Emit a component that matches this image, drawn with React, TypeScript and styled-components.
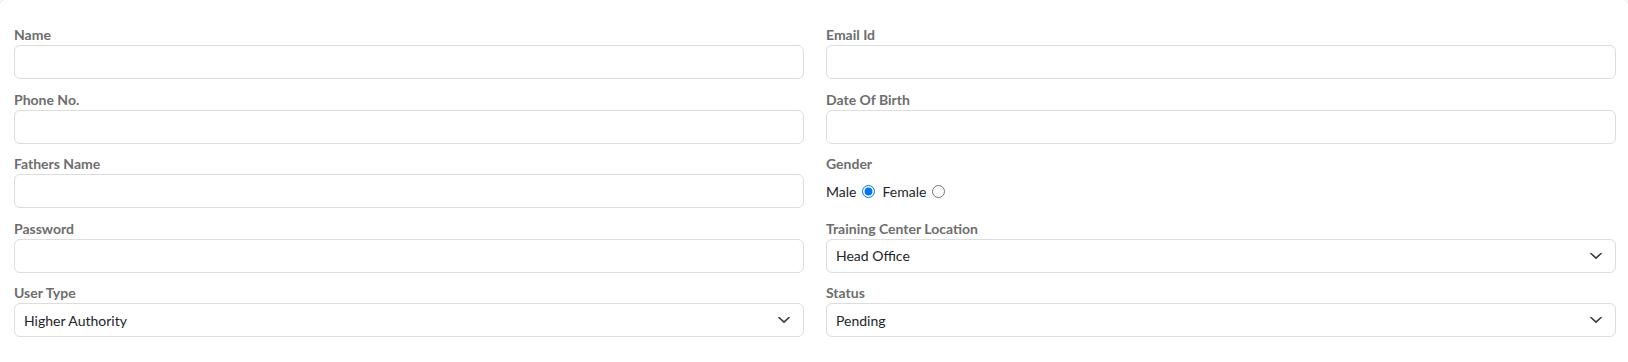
import React from "react";
import styled, { createGlobalStyle } from "styled-components";

const GlobalStyle = createGlobalStyle`
  html, body {
    margin: 0;
    padding: 0;
    background: #ffffff;
    overflow: hidden;
  }
  body {
    font-family: Lato, "Liberation Sans", Arial, sans-serif;
  }
  * { box-sizing: border-box; }
`;

const Card = styled.div`
  margin: -1px 0 0 -1px;
  width: calc(100% + 2px);
  min-height: 380px;
  border: 1px solid #e4e4e4;
  border-radius: 6px;
  background: #fff;
  padding: 26px 12px 0 14px;
`;

const FormGrid = styled.form`
  display: grid;
  grid-template-columns: 1fr 1fr;
  column-gap: 22px;
  row-gap: 11.6px;
`;

const Field = styled.div`
  display: flex;
  flex-direction: column;
  min-width: 0;
`;

const Label = styled.label`
  font-family: Lato, "Liberation Sans", Arial, sans-serif;
  font-size: 14px;
  font-weight: 700;
  line-height: 17px;
  color: #6d6d6d;
  margin-bottom: 2px;
`;

const TextInput = styled.input`
  height: 34px;
  width: 100%;
  border: 1px solid #dcdde1;
  border-radius: 6px;
  padding: 0 9px;
  font-family: Lato, "Liberation Sans", Arial, sans-serif;
  font-size: 14px;
  color: #212529;
  background: #fff;
  outline: none;
`;

const SelectWrap = styled.div`
  position: relative;
  width: 100%;
`;

const Select = styled.select`
  appearance: none;
  -webkit-appearance: none;
  height: 34px;
  width: 100%;
  border: 1px solid #dcdde1;
  border-radius: 6px;
  padding: 0 36px 0 9px;
  font-family: Lato, "Liberation Sans", Arial, sans-serif;
  font-size: 14px;
  color: #212529;
  background: #fff;
  outline: none;
`;

const Chevron = styled.svg`
  position: absolute;
  right: 14px;
  top: 50%;
  transform: translateY(-50%);
  width: 12px;
  height: 8px;
  pointer-events: none;
`;

const RadioRow = styled.div`
  height: 34px;
  display: flex;
  align-items: center;
  font-family: Lato, "Liberation Sans", Arial, sans-serif;
  font-size: 14px;
  color: #212529;
  padding-top: 1px;
`;

const RadioLabel = styled.label`
  display: inline-flex;
  align-items: center;
  gap: 6px;
  margin-right: 7px;
`;

const Radio = styled.input`
  margin: 0;
  width: 13px;
  height: 13px;
`;

const ChevronIcon = () => (
  <Chevron viewBox="0 0 12 8">
    <path
      d="M1 1.5 L6 6.2 L11 1.5"
      fill="none"
      stroke="#343a40"
      strokeWidth="1.6"
      strokeLinecap="round"
      strokeLinejoin="round"
    />
  </Chevron>
);

const SelectField = ({ value, options }: { value: string; options: string[] }) => (
  <SelectWrap>
    <Select defaultValue={value}>
      {options.map((o) => (
        <option key={o} value={o}>
          {o}
        </option>
      ))}
    </Select>
    <ChevronIcon />
  </SelectWrap>
);

export default function App() {
  return (
    <>
      <GlobalStyle />
      <Card>
        <FormGrid onSubmit={(e) => e.preventDefault()}>
          <Field>
            <Label>Name</Label>
            <TextInput type="text" />
          </Field>
          <Field>
            <Label>Email Id</Label>
            <TextInput type="text" />
          </Field>
          <Field>
            <Label>Phone No.</Label>
            <TextInput type="text" />
          </Field>
          <Field>
            <Label>Date Of Birth</Label>
            <TextInput type="text" />
          </Field>
          <Field>
            <Label>Fathers Name</Label>
            <TextInput type="text" />
          </Field>
          <Field>
            <Label>Gender</Label>
            <RadioRow>
              <RadioLabel>
                Male
                <Radio type="radio" name="gender" defaultChecked />
              </RadioLabel>
              <RadioLabel>
                Female
                <Radio type="radio" name="gender" />
              </RadioLabel>
            </RadioRow>
          </Field>
          <Field>
            <Label>Password</Label>
            <TextInput type="password" />
          </Field>
          <Field>
            <Label>Training Center Location</Label>
            <SelectField value="Head Office" options={["Head Office", "Branch Office"]} />
          </Field>
          <Field>
            <Label>User Type</Label>
            <SelectField value="Higher Authority" options={["Higher Authority", "Admin", "User"]} />
          </Field>
          <Field>
            <Label>Status</Label>
            <SelectField value="Pending" options={["Pending", "Approved", "Rejected"]} />
          </Field>
        </FormGrid>
      </Card>
    </>
  );
}
